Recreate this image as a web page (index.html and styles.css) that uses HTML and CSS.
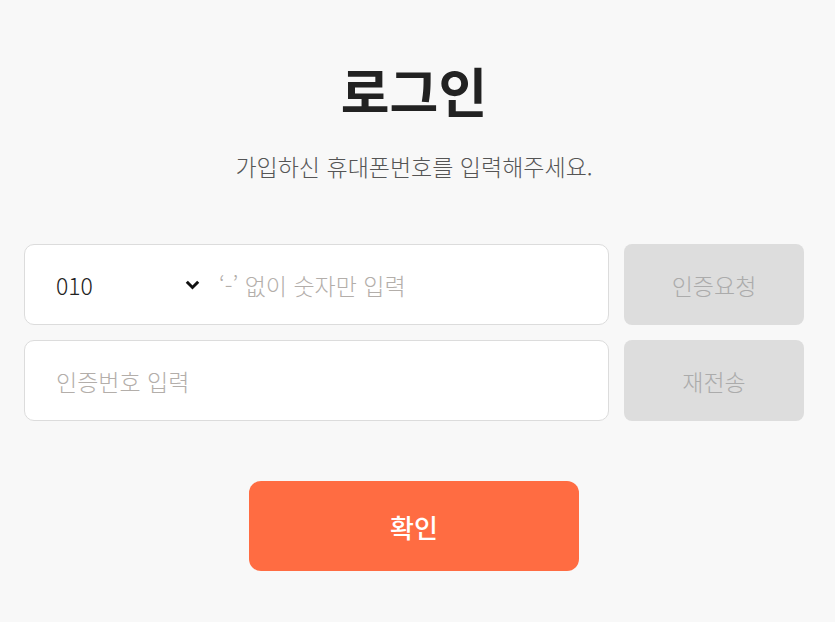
FILE: index.html
```html
<!DOCTYPE html>
<html lang="ko">
<head>
    <meta charset="UTF-8">
    <meta name="viewport" content="width=device-width, initial-scale=1.0">
    <title>로그인</title>
    <link rel="stylesheet" href="styles.css">
</head>
<body>
  <div class="container">
    <h1>로그인</h1>
    <p class="desc">가입하신 휴대폰번호를 입력해주세요.</p>

    <div class="row">
      <div class="field">
        <div class="prefix">
          <span>010</span>
          <svg width="15" height="10" viewBox="0 0 15 10"><path d="M1.8 1.8 L7.5 7.5 L13.2 1.8" fill="none" stroke="#111" stroke-width="3"/></svg>
        </div>
        <input type="text" placeholder="‘-’ 없이 숫자만 입력">
      </div>
      <button class="sub-btn">인증요청</button>
    </div>

    <div class="row">
      <div class="field">
        <input type="text" placeholder="인증번호 입력">
      </div>
      <button class="sub-btn">재전송</button>
    </div>

    <button class="confirm">확인</button>
  </div>
</body>
</html>
```

FILE: styles.css
```css
body {
  margin: 0;
  background-color: #f8f8f8;
  font-family: "Noto Sans CJK KR", "Noto Sans", sans-serif;
}

.container {
  width: 780px;
  margin-left: 24px;
  padding-top: 52px;
  display: flex;
  flex-direction: column;
  align-items: center;
}

h1 {
  margin: 0;
  font-size: 53px;
  font-weight: 700;
  color: #222;
  line-height: 76px;
}

.desc {
  margin: 22px 0 62px;
  font-size: 23px;
  font-weight: 300;
  color: #555;
  line-height: 32px;
}

.row {
  width: 100%;
  display: flex;
  gap: 15px;
  margin-bottom: 15px;
}

.field {
  flex: 1;
  height: 79px;
  background: #fff;
  border: 1px solid #dcdcdc;
  border-radius: 10px;
  display: flex;
  align-items: center;
  padding-left: 31px;
}

.prefix {
  width: 163px;
  display: flex;
  align-items: center;
  justify-content: space-between;
  padding-right: 19px;
  box-sizing: border-box;
  font-size: 23px;
  font-weight: 300;
  color: #222;
}

.field input {
  flex: 1;
  border: none;
  outline: none;
  background: transparent;
  font-family: inherit;
  font-size: 23px;
  font-weight: 300;
  color: #222;
  padding: 0;
}

.field input::placeholder {
  color: #b3aeaa;
}

.sub-btn {
  width: 180px;
  height: 81px;
  border: none;
  border-radius: 8px;
  background: #dddddd;
  color: #ababab;
  font-family: inherit;
  font-size: 23px;
  font-weight: 300;
}

.confirm {
  margin-top: 45px;
  width: 330px;
  height: 90px;
  border: none;
  border-radius: 12px;
  background: #ff6c42;
  color: #fff;
  font-family: inherit;
  font-size: 26px;
  font-weight: 500;
}
```
